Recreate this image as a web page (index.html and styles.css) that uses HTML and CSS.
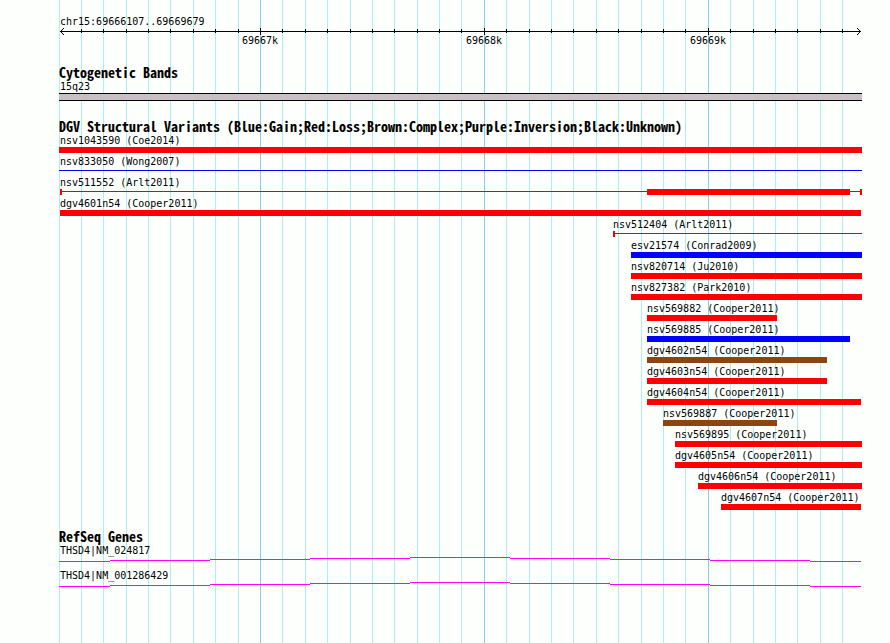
FILE: index.html
```
<!DOCTYPE html>
<html lang="en">
<head>
    <meta charset="UTF-8">
    <meta name="viewport" content="width=device-width, initial-scale=1.0">
    <title>chr15:69666107..69669679</title>
    <link rel="stylesheet" href="styles.css">
</head>
<body>
    <main class="browser">
        <!-- one line per 100 bp, strong line per 1000 bp -->
        <div class="grid">
            <i style="--at:0"></i><i style="--at:22"></i><i style="--at:44"></i><i style="--at:67"></i><i style="--at:89"></i><i style="--at:111"></i><i style="--at:134"></i><i style="--at:156"></i><i style="--at:179"></i>
            <i class="major" style="--at:201"></i><i style="--at:223"></i><i style="--at:246"></i><i style="--at:268"></i><i style="--at:291"></i><i style="--at:313"></i><i style="--at:335"></i><i style="--at:358"></i><i style="--at:380"></i><i style="--at:402"></i>
            <i class="major" style="--at:425"></i><i style="--at:447"></i><i style="--at:470"></i><i style="--at:492"></i><i style="--at:514"></i><i style="--at:537"></i><i style="--at:559"></i><i style="--at:582"></i><i style="--at:604"></i><i style="--at:626"></i>
            <i class="major" style="--at:649"></i><i style="--at:671"></i><i style="--at:694"></i><i style="--at:716"></i><i style="--at:738"></i><i style="--at:761"></i><i style="--at:783"></i>
        </div>

        <header class="ruler">
            <div class="label">chr15:69666107..69669679</div>
            <div class="scale">
                <svg class="arrow" width="4" height="7" viewBox="0 0 4 7"><path d="M3 0h1v1h-1zM2 1h1v1h-1zM1 2h1v1h-1zM0 3h4v1h-4zM1 4h1v1h-1zM2 5h1v1h-1zM3 6h1v1h-1z"/></svg>
                <div class="axis"></div>
                <svg class="arrow" width="4" height="7" viewBox="0 0 4 7"><path d="M0 0h1v1h-1zM1 1h1v1h-1zM2 2h1v1h-1zM0 3h4v1h-4zM2 4h1v1h-1zM1 5h1v1h-1zM0 6h1v1h-1z"/></svg>
                <div class="ticks">
                    <i style="--at:22"></i><i style="--at:44"></i><i style="--at:67"></i><i style="--at:89"></i><i style="--at:111"></i><i style="--at:134"></i><i style="--at:156"></i><i style="--at:179"></i>
                    <i class="major" style="--at:201"></i><i style="--at:223"></i><i style="--at:246"></i><i style="--at:268"></i><i style="--at:291"></i><i style="--at:313"></i><i style="--at:335"></i><i style="--at:358"></i><i style="--at:380"></i><i style="--at:402"></i>
                    <i class="major" style="--at:425"></i><i style="--at:447"></i><i style="--at:470"></i><i style="--at:492"></i><i style="--at:514"></i><i style="--at:537"></i><i style="--at:559"></i><i style="--at:582"></i><i style="--at:604"></i><i style="--at:626"></i>
                    <i class="major" style="--at:649"></i><i style="--at:671"></i><i style="--at:694"></i><i style="--at:716"></i><i style="--at:738"></i><i style="--at:761"></i><i style="--at:783"></i>
                </div>
            </div>
            <div class="numbers">
                <span style="--at:201">69667k</span>
                <span style="--at:425">69668k</span>
                <span style="--at:649">69669k</span>
            </div>
        </header>

        <section class="track">
            <h2>Cytogenetic Bands</h2>
            <div class="label">15q23</div>
            <div class="band"></div>
        </section>

        <section class="track">
            <h2>DGV Structural Variants (Blue:Gain;Red:Loss;Brown:Complex;Purple:Inversion;Black:Unknown)</h2>
            <div class="feature clipped" style="--from:0;--to:803"><div class="label">nsv1043590 (Coe2014)</div><div class="bar loss"></div></div>
            <div class="feature clipped" style="--from:0;--to:803"><div class="label">nsv833050 (Wong2007)</div><div class="bar thin gain"></div></div>
            <div class="feature" style="--from:1;--to:803">
                <div class="label">nsv511552 (Arlt2011)</div>
                <div class="parts">
                    <div class="cap"></div>
                    <div class="line" style="--len:585"></div>
                    <div class="block" style="--len:203"></div>
                    <div class="line" style="--len:10"></div>
                    <div class="cap"></div>
                </div>
            </div>
            <div class="feature" style="--from:1;--to:802"><div class="label">dgv4601n54 (Cooper2011)</div><div class="bar loss"></div></div>
            <div class="feature" style="--from:554;--to:803">
                <div class="label">nsv512404 (Arlt2011)</div>
                <div class="parts">
                    <div class="cap"></div>
                    <div class="line" style="--len:247"></div>
                </div>
            </div>
            <div class="feature" style="--from:572;--to:803"><div class="label">esv21574 (Conrad2009)</div><div class="bar gain"></div></div>
            <div class="feature" style="--from:572;--to:803"><div class="label">nsv820714 (Ju2010)</div><div class="bar loss"></div></div>
            <div class="feature" style="--from:572;--to:803"><div class="label">nsv827382 (Park2010)</div><div class="bar loss"></div></div>
            <div class="feature" style="--from:588;--to:718"><div class="label">nsv569882 (Cooper2011)</div><div class="bar loss"></div></div>
            <div class="feature" style="--from:588;--to:791"><div class="label">nsv569885 (Cooper2011)</div><div class="bar gain"></div></div>
            <div class="feature" style="--from:588;--to:768"><div class="label">dgv4602n54 (Cooper2011)</div><div class="bar complex"></div></div>
            <div class="feature" style="--from:588;--to:768"><div class="label">dgv4603n54 (Cooper2011)</div><div class="bar loss"></div></div>
            <div class="feature" style="--from:588;--to:802"><div class="label">dgv4604n54 (Cooper2011)</div><div class="bar loss"></div></div>
            <div class="feature" style="--from:604;--to:718"><div class="label">nsv569887 (Cooper2011)</div><div class="bar complex"></div></div>
            <div class="feature" style="--from:616;--to:803"><div class="label">nsv569895 (Cooper2011)</div><div class="bar loss"></div></div>
            <div class="feature" style="--from:616;--to:803"><div class="label">dgv4605n54 (Cooper2011)</div><div class="bar loss"></div></div>
            <div class="feature" style="--from:639;--to:803"><div class="label">dgv4606n54 (Cooper2011)</div><div class="bar loss"></div></div>
            <div class="feature" style="--from:662;--to:802"><div class="label">dgv4607n54 (Cooper2011)</div><div class="bar loss"></div></div>
        </section>

        <section class="track genes">
            <h2>RefSeq Genes</h2>
            <div class="gene">
                <div class="label">THSD4|NM_024817</div>
                <svg class="intron" viewBox="0 0 803 5" preserveAspectRatio="none"><path d="M0 4h51v1h-51zM51 3h100v1h-100zM151 2h100v1h-100zM251 1h100v1h-100zM351 0h100v1h-100zM451 1h100v1h-100zM551 2h100v1h-100zM651 3h100v1h-100zM751 4h51v1h-51z"/></svg>
            </div>
            <div class="gene">
                <div class="label">THSD4|NM_001286429</div>
                <svg class="intron" viewBox="0 0 803 5" preserveAspectRatio="none"><path d="M0 4h51v1h-51zM51 3h100v1h-100zM151 2h100v1h-100zM251 1h100v1h-100zM351 0h100v1h-100zM451 1h100v1h-100zM551 2h100v1h-100zM651 3h100v1h-100zM751 4h51v1h-51z"/></svg>
            </div>
        </section>
    </main>
</body>
</html>
```
FILE: styles.css
```
* {
    box-sizing: border-box;
}

body {
    margin: 0;
    background-color: #fdfffc;
    color: #000;
    font-family: "DejaVu Sans Mono", "Liberation Mono", monospace;
    font-size: 10px;
    line-height: 12px;
}

/* positions inside the panel are given on a scale of 0 to 803 */
.browser {
    position: relative;
    min-height: 100vh;
    margin: 0 28px 0 59px;
    padding: 13px 0 32px;
}

.grid {
    position: absolute;
    inset: 0;
    z-index: -1;
}

.grid i,
.ticks i {
    position: absolute;
    left: calc(var(--at) / 803 * 100%);
    width: 1px;
}

.grid i {
    top: 0;
    bottom: 0;
    background-color: #afeeee;
}

.grid .major {
    background-color: #87ceeb;
}

.label {
    height: 15px;
    padding: 3px 0 0 1px;
    white-space: nowrap;
}

/* ruler */
.scale {
    position: relative;
    display: flex;
    align-items: center;
    height: 7px;
    padding: 0 1px;
}

.axis {
    flex: 1;
    height: 1px;
    background-color: #000;
}

.ticks {
    position: absolute;
    inset: 0;
}

.ticks i {
    top: 1px;
    height: 4px;
    background-color: #000;
}

.ticks .major {
    top: 0;
    height: 7px;
}

.numbers {
    position: relative;
    height: 12px;
}

.numbers span {
    position: absolute;
    left: calc(var(--at) / 803 * 100%);
    transform: translateX(-50%);
}

/* tracks */
.track {
    padding-top: 19px;
}

.track h2 {
    margin: 0;
    height: 12px;
    font-family: "Noto Sans Mono CJK SC", "DejaVu Sans Mono", monospace;
    font-size: 14px;
    font-weight: bold;
    line-height: 13px;
    white-space: nowrap;
}

.band {
    height: 8px;
    border: solid #000;
    border-width: 1px 0;
    background-color: #c8c0c4;
}

.feature {
    display: flow-root;
    height: 21px;
    margin-left: calc(var(--from) / 803 * 100%);
    margin-right: calc((803 - var(--to)) / 803 * 100%);
}

.feature .label {
    padding-left: 0;
}

/* runs out of the panel on the left */
.clipped .label {
    padding-left: 1px;
}

.bar {
    height: 6px;
}

.thin {
    height: 1px;
    margin-top: 2px;
    margin-bottom: 3px;
}

.loss {
    background-color: #f00;
}

.gain {
    background-color: #00f;
}

.complex {
    background-color: #8b4513;
}

/* a feature drawn as several blocks joined by a line */
.parts {
    display: flex;
    height: 6px;
}

.cap {
    width: 2px;
    background-color: #f00;
}

.line {
    flex: var(--len) 1 0;
    height: 1px;
    margin-top: 2px;
    background-color: #e60000;
}

.block {
    flex: var(--len) 1 0;
    background-color: #f00;
}

.genes {
    padding-top: 20px;
}

.gene {
    height: 25px;
}

.intron {
    display: block;
    width: 100%;
    height: 5px;
    fill: #f0f;
    shape-rendering: crispEdges;
}
```
